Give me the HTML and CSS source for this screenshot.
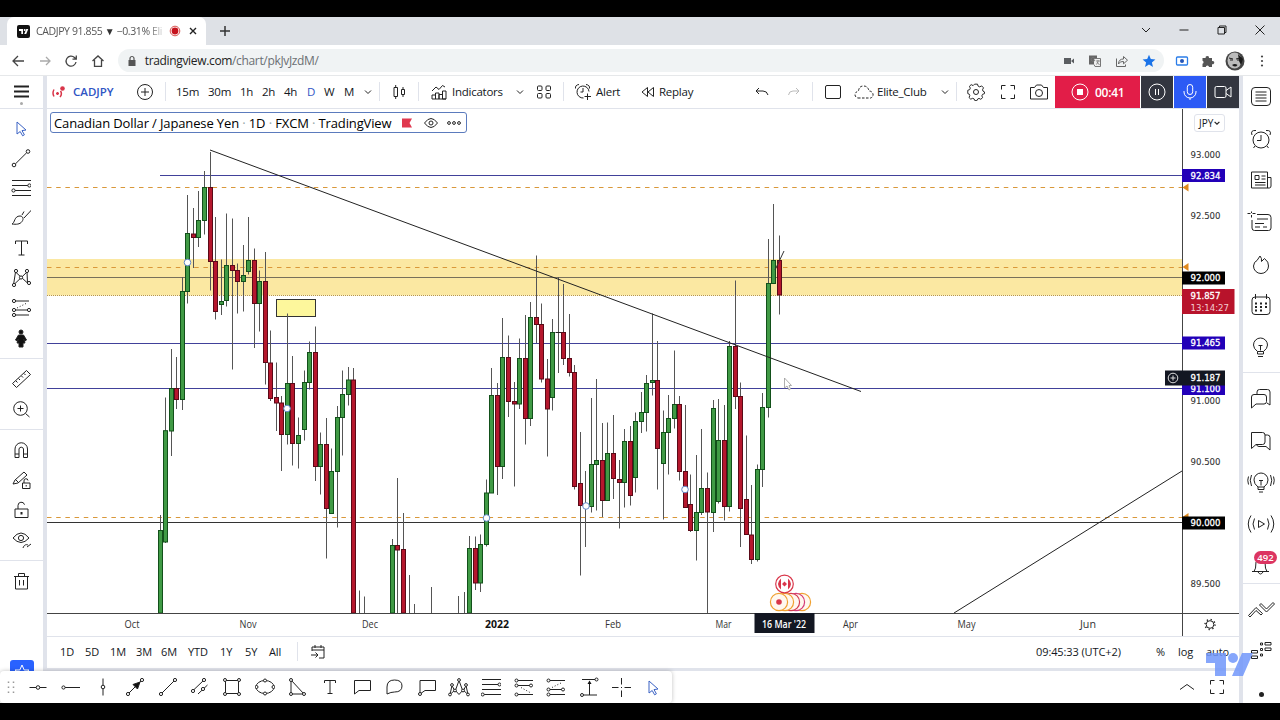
FILE: index.html
```
<!DOCTYPE html>
<html lang="en">
<head>
    <meta charset="UTF-8" />
    <meta name="viewport" content="width=device-width, initial-scale=1" />
    <title>CADJPY 91.855</title>
    <link rel="stylesheet" href="styles.css">
</head>
<body>
    <svg class="defs">
        <symbol id="chev" viewBox="0 0 10 10"><path d="M2 3.5l3 3 3-3" /></symbol>
        <symbol id="cursor" viewBox="0 0 20 20"><path d="M6 4l9 8-4 .6 2.400 4.200-1.800 1-2.400-4.300L6 16z" /></symbol>
        <symbol id="full" viewBox="0 0 20 20"><path d="M3.500 7.500v-4h4M12.500 3.500h4v4M16.500 12.500v4h-4M7.500 16.500h-4v-4" /></symbol>
    </svg>

    <div class="browser">
        <div class="tabs">
            <div class="tab">
                <svg class="favicon" viewBox="0 0 13 13"><rect width="13" height="13" rx="2" fill="#111" /><path d="M2 4h4v5H4.300V6H2zM9.300 4h2L9.200 9h-2z" fill="#fff" /><circle cx="7.700" cy="5" r="1" fill="#fff" /></svg>
                <span class="tab-title">CADJPY 91.855 <i>▼</i> −0.31% Eli</span>
                <svg class="rec-dot" viewBox="0 0 12 12"><circle cx="6" cy="6" r="4.800" fill="none" stroke="#d9534f" /><circle cx="6" cy="6" r="3.400" fill="#c5121c" /></svg>
                <svg class="tab-close" viewBox="0 0 10 10"><path d="M2 2l6 6M8 2l-6 6" stroke="#222" stroke-width="1.400" /></svg>
            </div>
            <svg class="new-tab" viewBox="0 0 12 12"><path d="M6 1v10M1 6h10" stroke="#333" stroke-width="1.500" /></svg>
            <div class="win-buttons">
                <svg viewBox="0 0 12 12"><path d="M2 4l4 4 4-4" /></svg>
                <svg viewBox="0 0 12 12"><path d="M1.500 6h9" /></svg>
                <svg viewBox="0 0 12 12"><path d="M2 3.500h6.500V10H2zM3.500 3V2h6.500v6.500H9" /></svg>
                <svg viewBox="0 0 12 12"><path d="M1.500 1.500l9 9M10.500 1.500l-9 9" /></svg>
            </div>
        </div>
        <div class="navbar">
            <svg class="nav-icon" viewBox="0 0 14 14"><path d="M13 7H2M7 2L2 7l5 5" stroke="#444" /></svg>
            <svg class="nav-icon" viewBox="0 0 14 14"><path d="M2 7h10M8 3l4 4-4 4" stroke="#aaa" /></svg>
            <svg class="nav-icon" viewBox="0 0 14 14"><path d="M12 8A5 5 0 1 1 10.500 3.500L12 5M12.300 1.500V5.200H8.500" stroke="#444" /></svg>
            <svg class="nav-icon" viewBox="0 0 14 14"><path d="M1.500 7L7 2l5.500 5M3.500 6v6.300h7V6" stroke="#444" /></svg>
            <div class="omnibox">
                <svg class="lock" viewBox="0 0 10 12"><rect x="1.500" y="5" width="7" height="6" fill="#555" /><path d="M3 5V3.500a2 2 0 0 1 4 0V5" fill="none" stroke="#555" stroke-width="1.200" /></svg>
                <span class="url">tradingview.com<i>/chart/pkJvJzdM/</i></span>
                <div class="omni-icons">
                    <svg viewBox="0 0 14 14"><path d="M2 4h7v6H2zM9 7l3-2.500v5z" fill="#5a5d61" /></svg>
                    <svg viewBox="0 0 14 14"><rect x="1" y="1.500" width="8" height="9" fill="#666" /><path d="M6 4.500h6.500v8H7l-1-2" fill="#eee" stroke="#777" /><path d="M6.500 4A2 2 0 1 0 7 6H5M8 7h4M10 6v1c0 2-1 3-2 3.500M9 8l2.500 3" fill="none" stroke="#777" stroke-width=".8" /></svg>
                    <svg viewBox="0 0 14 14"><path d="M1.500 4.500v8h9v-2M3.500 10c0-3.500 2-5 5-5V2.500l4 3.700-4 3.600V7.500c-2 0-4 .5-5 2.500z" fill="none" stroke="#666" /></svg>
                    <svg viewBox="0 0 14 14"><path d="M7 .8l1.800 4.200 4.600.4-3.500 3 1.100 4.500L7 10.500 3 12.900l1.100-4.500-3.500-3 4.600-.4z" fill="#1a73e8" /></svg>
                </div>
            </div>
            <div class="ext-icons">
                <svg viewBox="0 0 14 14"><rect x="1.500" y="3" width="11" height="8" rx="1" fill="#fff" stroke="#2b7de9" stroke-width="1.300" /><circle cx="7" cy="7" r="2" fill="#2456b8" /></svg>
                <svg viewBox="0 0 14 14"><path d="M1.500 4h3.200a1.700 1.700 0 1 1 3.300 0H11v3a1.700 1.700 0 1 1 0 3.200V13H8a1.600 1.600 0 0 0-3.200 0H1.500V9.800a1.600 1.600 0 0 0 0-3z" fill="#555" /></svg>
                <svg class="avatar" viewBox="0 0 20 20"><circle cx="10" cy="10" r="9.500" fill="#444" /><ellipse cx="9.500" cy="9.500" rx="7" ry="8" fill="#bbb" /><path d="M4 7l4 1M11 8l4-1M5 9h3M12 9h2" stroke="#222" fill="none" /><path d="M7 14q3-2 5.500 0-2 3-5.500 0M13 3l5 5-2 6-2-4z" fill="#1a1a1a" /></svg>
                <svg viewBox="0 0 14 14"><circle cx="7" cy="2.500" r="1.100" fill="#444" /><circle cx="7" cy="7" r="1.100" fill="#444" /><circle cx="7" cy="11.500" r="1.100" fill="#444" /></svg>
            </div>
        </div>

        <div class="app">
            <div class="tools">
                <div class="menu">
                    <svg viewBox="0 0 20 20"><path d="M3 4.500h15M3 9.500h15M3 14.500h15" stroke-width="1.800" /></svg>
                    <span class="dot"></span>
                </div>
                <svg class="blue" viewBox="0 0 20 20"><use href="#cursor" /></svg>
                <svg viewBox="0 0 20 20"><circle cx="3" cy="17" r="1.800" /><circle cx="17" cy="3.500" r="1.800" /><path d="M4.500 15.800L15.600 4.800" /></svg>
                <svg viewBox="0 0 20 20"><path d="M1 2.500h19M1 7.500h17M4 12.500h16M1 17.500h19" /><circle class="w" cx="18.400" cy="7.500" r="1.600" /><circle class="w" cx="2.500" cy="12.500" r="1.600" /></svg>
                <svg viewBox="0 0 20 20"><path d="M1 16c3-1 2-8 8-8 3 0 4 3 2 5.500-2 3-6 3-10 2.500zM11 7l2-3.500M13 10l7.500-8" /></svg>
                <svg viewBox="0 0 20 20"><path d="M4.500 6V3h12v3M10.500 3v14M7.500 17h6" /></svg>
                <svg viewBox="0 0 20 20"><path d="M2.500 17L4.500 4l12 11L16 4 2.500 17" /><circle class="w" cx="3" cy="17" r="1.600" /><circle class="w" cx="5" cy="3" r="1.600" /><circle class="w" cx="10" cy="9.500" r="1.600" /><circle class="w" cx="16" cy="3" r="1.600" /><circle class="w" cx="18" cy="15" r="1.600" /></svg>
                <svg viewBox="0 0 20 20"><path d="M3 3h15M3 12h15M3 17h15" /><path d="M6 10l10-5" stroke-dasharray="1 2" /><circle class="w" cx="3" cy="3" r="1.600" /><circle class="w" cx="3" cy="12" r="1.600" /><circle class="w" cx="18" cy="12" r="1.600" /><circle class="w" cx="3" cy="17" r="1.600" /></svg>
                <svg viewBox="0 0 20 20"><path d="M7.500 7h5l3 5-1.500 1-1.500-2 1.500 4h-2v4H8v-4H6l1.500-4L6 13l-1.500-1z" fill="#111" /><circle cx="10" cy="4" r="2" fill="#111" /></svg>
                <hr class="gap-a">
                <svg viewBox="0 0 20 20"><path d="M1.500 14.500L15.500 1.500l4 4L5.500 18.500zM5 12l1.500 1.500M7.500 9.500L9 11M10.500 7L12 8.500M13 4.500L14.500 6" /></svg>
                <svg viewBox="0 0 20 20"><circle cx="9.500" cy="9.500" r="6.800" /><path d="M6.500 9.500h6M9.500 6.500v6M14.500 14.500l4 3.500" /></svg>
                <hr class="gap-b">
                <svg viewBox="0 0 20 20"><path d="M4 17.500V9a6.200 6.200 0 0 1 12.500 0v8.500h-4V9a2.300 2.300 0 0 0-4.500 0v8.500zM4 14h4M12.500 14h4" /></svg>
                <svg viewBox="0 0 20 20"><path d="M2 14l2-4 9-8 3 3-9 8zM5 10l2.500 2.500M11.500 13h7.500v5.500h-7.500zM13 13v-2a2 2 0 0 1 4-.5M15.200 15v1.500" /></svg>
                <svg viewBox="0 0 20 20"><path d="M4 9h13v8.500H4zM7 9V5.500a3.300 3.300 0 0 1 6.500-.8" /><path d="M10.500 12v2.500" stroke-width="2" /></svg>
                <svg viewBox="0 0 20 20"><path d="M2 8q8-10 16 0-8 9-16 0zM12 18c1-3 3-4 5-3M16 17l4-3" /><circle cx="10" cy="8" r="2.600" /></svg>
                <hr class="gap-c">
                <svg class="trash" viewBox="0 0 20 20"><path d="M3 5.500h15M7.500 5V2.500h6V5M4.500 5.500V18h12V5.500M8.500 9v5.500M12.500 9v5.500" /></svg>
                <div class="fav"><svg viewBox="0 0 20 20"><path d="M10 3l2.200 5H17l-4 3.500L14.500 17 10 14l-4.500 3L7 11.500 3 8h4.800z" stroke="#fff" /></svg></div>
            </div>

            <div class="main">
                <div class="topbar">
                    <svg class="pair" viewBox="0 0 14 14"><path d="M2 4.500Q0 8 2 11.500M8.500 6Q10.500 9 8 12M4 8.500h3M5.500 7v3" stroke="#d9364a" stroke-width="1.500" /><circle cx="10.500" cy="3.500" r="2.300" fill="#d9364a" stroke="none" /></svg>
                    <b class="symbol">CADJPY</b>
                    <svg class="i18" viewBox="0 0 18 18"><circle cx="9" cy="9" r="7.500" /><path d="M5 9h8M9 5v8" /></svg>
                    <span class="bar"></span>
                    <span>15m</span><span>30m</span><span>1h</span><span>2h</span><span>4h</span><span class="blue-text">D</span><span>W</span><span>M</span>
                    <svg class="chev" viewBox="0 0 10 10"><use href="#chev" /></svg>
                    <span class="bar"></span>
                    <svg class="i16" viewBox="0 0 16 16"><path d="M3 3.500h3.500v9H3zM4.700 1v2.500M4.700 12.500V15M10.500 5.500h3v5h-3zM12 3v2.500M12 10.500V13" /></svg>
                    <span class="bar"></span>
                    <svg class="i16" viewBox="0 0 16 16"><path d="M1 7l4-4 3 2.500L11.500 1.500 14 3M1 15v-4h3.500v4M4.500 15V9H8v6M8 15v-4.500h3.500V15M11.500 15V7H15v8zM1 15h14" /></svg>
                    <span>Indicators</span>
                    <svg class="chev" viewBox="0 0 10 10"><use href="#chev" /></svg>
                    <svg class="i16" viewBox="0 0 16 16"><rect x="1.500" y="2" width="4.500" height="4.500" rx="1" /><rect x="10" y="2" width="4.500" height="4.500" rx="1" /><rect x="1.500" y="9.500" width="4.500" height="4.500" rx="1" /><rect x="10" y="9.500" width="4.500" height="4.500" rx="1" /></svg>
                    <span class="bar"></span>
                    <svg class="i18" viewBox="0 0 18 18"><path d="M9.500 15A6 6 0 1 1 15 8.500M9 5v4H6.500M1.500 5.500Q1 2 5 1.500M12 1.500q4 .5 3.500 4M13.500 10.500v6.500M10.500 13.500h6.500" /></svg>
                    <span>Alert</span>
                    <svg class="i16" viewBox="0 0 16 16"><path d="M7.500 3.500v9L2 8zM13.500 3.500v9L8 8z" /></svg>
                    <span>Replay</span>
                    <svg class="i16" viewBox="0 0 16 16"><path d="M5 4L2 7l3 3M2 7h7q4 0 5 4" /></svg>
                    <svg class="i16 pale" viewBox="0 0 16 16"><path d="M10 4l3 3-3 3M13 7H7q-4 0-4.500 4" /></svg>
                    <span class="bar"></span>
                    <svg class="i18" viewBox="0 0 18 18"><rect x="1.500" y="2.500" width="15" height="13" rx="1.500" /></svg>
                    <svg class="cloud" viewBox="0 0 20 16"><path d="M4 14h12.500q3-1 2.500-4-1-3-4-3-1-5-5.500-5T4.500 7Q1 8 1 11q.5 2.500 3 3z" stroke-dasharray="2.500 1.500" /></svg>
                    <span>Elite_Club</span>
                    <svg class="chev" viewBox="0 0 10 10"><use href="#chev" /></svg>
                    <span class="bar"></span>
                    <svg class="i18" viewBox="0 0 18 18"><path d="M7.500 1.500h3l.6 2 1.700.8 2-1 1.900 2-1 2 .5 1.400 1.500.8v1.800l-2 .7-.7 1.600.8 1.800-1.900 1.700-1.800-.9-1.400.6-.8 1.700H7.800l-.8-1.800-1.500-.6-1.900.9-1.800-1.700.8-2-.6-1.500-1.500-.6V7.800l2-.7.6-1.500-.9-1.900 1.800-1.700 2 1z" transform="translate(.3 -.3)scale(.97)" /><circle cx="9" cy="9" r="2.500" /></svg>
                    <svg class="i20" viewBox="0 0 20 20"><use href="#full" /></svg>
                    <svg class="i20" viewBox="0 0 20 20"><path d="M1.500 5.500h4L7.500 3h5l2 2.500h4v11.500h-17z" /><circle cx="10" cy="11" r="3.500" /></svg>
                    <div class="recorder">
                        <div class="stop"><svg viewBox="0 0 18 18"><circle cx="9" cy="9" r="8" /><rect x="6" y="6" width="6" height="6" fill="#fff" stroke="none" /></svg>00:41</div>
                        <div class="btn"><svg viewBox="0 0 18 18"><circle cx="9" cy="9" r="8" /><path d="M7.500 6v6M10.500 6v6" /></svg></div>
                        <div class="btn mic"><svg viewBox="0 0 18 18"><rect x="6.300" y="1.500" width="5.400" height="10" rx="2.700" /><path d="M3 8v1a6 6 0 0 0 12 0V8M9 15v2" /></svg></div>
                        <div class="btn"><svg viewBox="0 0 18 18"><rect x="1" y="3.500" width="11" height="11" rx="1.500" /><path d="M12 7.500L17 4v10l-5-3.500" /></svg></div>
                    </div>
                </div>

                <div class="chart-wrap">
                    <svg id="chart" viewBox="47 109 1192 527" width="1192" height="527"></svg>
                    <div class="legend">
                        <span>Canadian Dollar / Japanese Yen <i>·</i> 1D <i>·</i> FXCM <i>·</i> TradingView</span>
                        <svg class="flag" viewBox="0 0 12 12"><path d="M1 1.500h10L8.500 6l2.500 4.500H1z" fill="#e0384e" stroke="none" /></svg>
                        <svg class="eye" viewBox="0 0 16 12"><path d="M1.500 6q6.500-9 13 0-6.500 9-13 0z" /><circle cx="8" cy="6" r="2" /></svg>
                        <svg class="more" viewBox="0 0 16 6"><circle cx="3" cy="3" r="1.400" /><circle cx="8" cy="3" r="1.400" /><circle cx="13" cy="3" r="1.400" /></svg>
                    </div>
                    <div class="currency">JPY<svg viewBox="0 0 10 10"><use href="#chev" /></svg></div>
                </div>

                <div class="ranges">
                    <span>1D</span><span>5D</span><span>1M</span><span>3M</span><span>6M</span><span>YTD</span><span>1Y</span><span>5Y</span><span>All</span>
                    <span class="bar"></span>
                    <svg class="i16" viewBox="0 0 16 16"><path d="M2 7V3h12v11H9M2 6h12M5 1v3M11 1v3M1 11h7M5.500 8.500L8 11l-2.500 2.500" /></svg>
                    <span class="clock">09:45:33 (UTC+2)</span><span>%</span><span>log</span><span>auto</span>
                </div>
                <div class="bottom">
                    <svg viewBox="0 0 20 20"><path d="M3 12.500l7-5 7 5" /></svg>
                    <svg viewBox="0 0 20 20"><use href="#full" /></svg>
                </div>
            </div>

            <div class="side">
                <svg viewBox="0 0 22 22"><rect x="1.500" y="1.500" width="19" height="18" rx="3.500" /><path d="M5.500 6h11M5.500 9h11M5.500 12h11M5.500 15h11" /></svg>
                <svg viewBox="0 0 22 22"><circle cx="11" cy="12" r="8" /><path d="M11 7v5.500H7M2 7Q0 2 6 2.500M16 2.500q6-.5 4 4.500M5 18l-1.500 2M17 18l1.500 2" /></svg>
                <svg viewBox="0 0 22 22"><path d="M1.500 3h16v16h-16zM17.500 8.500h3.500V17q0 2-1.700 2h-2M5 6.500h4v4H5zM11.500 7h4M11.500 10h4M5 13.500h10.500M5 16h10.500" /></svg>
                <svg class="wide" viewBox="-3 0 28 22"><path d="M7 3.500h11q3 0 3 3V17q0 2.500-2.500 2.500h-14Q2 19.500 2 17V9M7 8h11M5 12.500h9M5 16h5M13 16h4M-2.500 2.500h3M1.500.5v1.500M2.500 2.500h3M1.500 4v2.500" /></svg>
                <svg viewBox="0 0 22 22"><path d="M10 3Q12 5 11.500 8.500L14.500 5.500Q19 9 18.500 13a7.500 7.500 0 0 1-15 0Q4 8.500 7 7.500L10 3z" /></svg>
                <svg viewBox="0 0 22 22"><rect x="2" y="3" width="18" height="17.500" rx="3" /><path d="M5.500 0v5M16.500 0v5" /><path d="M5 9.500h2M10 9.500h2M15 9.500h2M5 13h2M10 13h2M15 13h2M5 16.500h2M10 16.500h2" stroke-width="1.800" /></svg>
                <svg viewBox="0 0 22 22"><path d="M7.500 15.500Q3.500 12.500 3.500 9a7 7 0 0 1 14 0q0 3.500-4 6.500zM7.500 15.500V18h6v-2.500M8 20.500h5M8.500 9.500h4M10.500 9.500v5" /></svg>
                <hr class="s1">
                <svg viewBox="0 0 22 22"><path d="M7 6V4q0-2.500 2.500-2.500h8Q20 1.500 20 4v13l-3-2M4 6.500h10q2.500 0 2.500 2.500v4.500q0 2.500-2.500 2.500H6l-4.500 4V9q0-2.500 2.500-2.500z" /></svg>
                <svg viewBox="0 0 22 22"><path d="M1.500 2.500h11Q15 2.500 15 5v7q0 2.500-2.500 2.500H6l-4.500 4zM15 5h2.500Q20 5 20 7.500V20l-4-3.500H9q-2 0-2.500-2" /></svg>
                <svg class="wide" viewBox="0 0 28 22"><path d="M11 16Q7 13 7 9a7 7 0 0 1 14 0q0 4-4 7zM11 16v2.500h6V16M12 21h4M12 9.500h4M14 9.500v5M4.500 4Q2 9 4.500 15M1.500 5.500Q0 9 1.500 13.500M23.500 4q2.500 5 0 11M26.500 5.500q1.500 3.500 0 8" /></svg>
                <svg class="wide" viewBox="0 0 28 22"><path d="M11.500 7.500v7l6-3.500zM7.500 5.500Q4.500 11 7.500 16.500M4 2.500q-5.500 8.500 0 17M20.500 5.500q3 5.500 0 11M24 2.500q5.500 8.500 0 17" /></svg>
                <div class="bell">
                    <svg viewBox="0 0 22 22"><path d="M2 16.500h17M4 16.500q2-2 2-9.500M17 16.500q-2-2-2-9.500M8 17q2.500 4 5 0" /></svg>
                    <span class="badge">492</span>
                </div>
                <hr class="s2">
                <svg class="wide" viewBox="0 0 28 22"><path d="M1.500 16.500l7.500-8 6.500 6-1.500 1.500-5-4.500-6 6.500zM12.500 6L14 4.500l5.500 5.500 6.500-6.500 1.500 1.500-8 8z" /></svg>
                <svg viewBox="0 0 22 22"><path d="M1.500 10.500h6v2.500h-6zM1.500 16h6v2.500h-6zM15 2.500h6V5h-6zM15 8h6v2.500h-6zM10.500 3h2v2h-2zM10.500 8.500h2v2h-2zM10.500 14h2v2h-2z" /></svg>
                <span class="tip"></span>
            </div>

            <svg class="tv-logo" viewBox="0 0 47 24"><path d="M0 1h20v23H9V11H0zM36 1h11l-10 23H26z" fill="#7297fb" /><circle cx="27" cy="6" r="5" fill="#7297fb" /></svg>

            <div class="drawbar">
                <svg class="grip" viewBox="0 0 10 14"><path d="M2.500 1.500v12M7.500 1.500v12" stroke="#999" stroke-width="1.500" stroke-dasharray="1.500 3.500" /></svg>
                <svg viewBox="0 0 20 20"><path d="M1.500 10.500h17" /><circle class="w" cx="10" cy="10.500" r="1.800" /></svg>
                <svg viewBox="0 0 20 20"><path d="M3 10.500h16" /><circle class="w" cx="2.500" cy="10.500" r="1.600" /></svg>
                <svg viewBox="0 0 20 20"><path d="M10 1.500v17" /><circle class="w" cx="10" cy="10" r="1.800" /></svg>
                <svg viewBox="0 0 20 20"><path d="M3 17L16.500 3.500" /><path d="M15 5l-2.500 7L8 7.500z" fill="#111" /><circle class="w" cx="3" cy="17" r="1.600" /><circle class="w" cx="17" cy="3" r="1.600" /></svg>
                <svg viewBox="0 0 20 20"><path d="M3 17L17 3" /><circle class="w" cx="3" cy="17" r="1.600" /><circle class="w" cx="17" cy="3" r="1.600" /></svg>
                <svg viewBox="0 0 20 20"><path d="M2.500 14L14 3M8 17l9.500-9" /><circle class="w" cx="3" cy="14" r="1.600" /><circle class="w" cx="14" cy="3" r="1.600" /><circle class="w" cx="13" cy="12" r="1.600" /></svg>
                <svg viewBox="0 0 20 20"><path d="M3.500 3.500h13v13h-13z" /><circle class="w" cx="3" cy="3" r="1.500" /><circle class="w" cx="17" cy="3" r="1.500" /><circle class="w" cx="3" cy="17" r="1.500" /><circle class="w" cx="17" cy="17" r="1.500" /></svg>
                <svg viewBox="0 0 20 20"><ellipse cx="10" cy="10" rx="9" ry="6.500" /><circle class="w" cx="1.500" cy="10" r="1.500" /><circle class="w" cx="18.500" cy="10" r="1.500" /><circle class="w" cx="10" cy="3.500" r="1.500" /><circle class="w" cx="10" cy="16.500" r="1.500" /></svg>
                <svg viewBox="0 0 20 20"><path d="M4 3v14h13z" /><circle class="w" cx="4" cy="3" r="1.500" /><circle class="w" cx="4" cy="17" r="1.500" /><circle class="w" cx="17" cy="17" r="1.500" /></svg>
                <svg viewBox="0 0 20 20"><path d="M4.500 6V3.500h11V6M10 3.500v13M7.500 16.500h5" /></svg>
                <svg viewBox="0 0 20 20"><path d="M2.500 3.500h16v10H7l-4.500 3.500z" /></svg>
                <svg viewBox="0 0 20 20"><path d="M3 17V10q0-7 7.500-7Q18 3 18 9t-7.500 6Q7 15 3 17z" /></svg>
                <svg viewBox="0 0 20 20"><path d="M3 17V3.500h15.500v10H8z" /><circle class="w" cx="3" cy="17" r="1.500" /></svg>
                <svg class="head" viewBox="0 0 22 20"><path d="M2 17.500l2-9 3 6 4-11 4 11 3-6 2 9M2 17.500l5-4.500 4 4.500 4-4.500 5 4.500" /><circle class="w" cx="2" cy="17.500" r="1.400" /><circle class="w" cx="4" cy="8" r="1.400" /><circle class="w" cx="7" cy="13.500" r="1.400" /><circle class="w" cx="11" cy="3" r="1.400" /><circle class="w" cx="15" cy="13.500" r="1.400" /><circle class="w" cx="18" cy="8" r="1.400" /><circle class="w" cx="20" cy="17.500" r="1.400" /></svg>
                <svg viewBox="0 0 20 20"><path d="M1 2.500h19M1 7.500h18M1 12.500h19M3 17.500h17" /><circle class="w" cx="18.500" cy="7.500" r="1.500" /><circle class="w" cx="1.700" cy="17.500" r="1.500" /></svg>
                <svg viewBox="0 0 20 20"><path d="M2 3.500h17M2 8.500h15M2 17.500h17" /><path d="M7 10.500l9 5" stroke-dasharray="1 2" /><circle class="w" cx="2.500" cy="3.500" r="1.500" /><circle class="w" cx="2.500" cy="8.500" r="1.500" /><circle class="w" cx="17" cy="8.500" r="1.500" /><circle class="w" cx="2.500" cy="17.500" r="1.500" /></svg>
                <svg viewBox="0 0 20 20"><path d="M2 3.500h17M2 12.500h15M2 17.500h17" /><path d="M6 10.500l10-5" stroke-dasharray="1 2" /><circle class="w" cx="2.500" cy="3.500" r="1.500" /><circle class="w" cx="2.500" cy="12.500" r="1.500" /><circle class="w" cx="17" cy="12.500" r="1.500" /><circle class="w" cx="2.500" cy="17.500" r="1.500" /></svg>
                <svg viewBox="0 0 20 20"><path d="M3 2.500h15M3 18h15M10.500 5v13" /><path d="M10.500 3.500l2 3.500h-4z" fill="#111" stroke="none" /><circle class="w" cx="17.500" cy="2.500" r="1.500" /><circle class="w" cx="3" cy="18" r="1.500" /></svg>
                <svg viewBox="0 0 20 20"><path d="M10.500 1v6.500M10.500 13.500V20M1 10.500h6.500M13.500 10.500H20M10 10.500h1" /></svg>
                <svg class="blue" viewBox="0 0 20 20"><use href="#cursor" /></svg>
            </div>
        </div>
    </div>

    <script src="chart.js"></script>
</body>
</html>
```
FILE: styles.css
```
* {
    box-sizing: border-box;
}
body {
    margin: 0;
    height: 720px;
    padding: 17px 0;
    background: #000;
    overflow: hidden;
    font-family: "Open Sans", "Noto Sans", sans-serif;
    font-size: 11.5px;
    color: #131722;
}
svg {
    display: block;
    fill: none;
    stroke: #222;
    flex: none;
}
i {
    font-style: normal;
}
.defs {
    display: none;
}
.w {
    fill: #fff;
}
.browser {
    height: 686px;
    background: #fff;
    overflow: hidden;
}

/* browser chrome */
.tabs {
    display: flex;
    align-items: center;
    height: 28px;
    background: #dee1e6;
    padding-left: 7px;
}
.tab {
    display: flex;
    align-items: center;
    width: 199px;
    height: 28px;
    padding-left: 10px;
    background: #fff;
    border-radius: 7px 7px 0 0;
}
.tab svg, .new-tab {
    stroke: none;
}
.favicon {
    width: 13px;
    height: 13px;
}
.tab-title {
    width: 127px;
    margin-left: 6px;
    white-space: nowrap;
    font-size: 10.5px;
    letter-spacing: -0.38px;
    color: #555;
    -webkit-mask-image: linear-gradient(to right, #000 88%, rgba(0, 0, 0, .2));
}
.tab-title i {
    font-size: 10px;
    letter-spacing: -0.5px;
    color: #333;
}
.rec-dot {
    width: 12px;
    height: 12px;
    margin-left: 6px;
}
.tab-close {
    width: 10px;
    height: 10px;
    margin-left: 7px;
}
.new-tab {
    width: 12px;
    height: 12px;
    margin-left: 13px;
}
.win-buttons {
    display: flex;
    gap: 26px;
    margin: -3px 14px 0 auto;
}
.win-buttons svg {
    width: 12px;
    height: 12px;
}
.navbar {
    display: flex;
    align-items: center;
    height: 31px;
    padding: 1px 0 0 11px;
    border-bottom: 1px solid #e6e8ea;
}
.nav-icon {
    width: 14px;
    height: 14px;
    margin-right: 12.7px;
    stroke-width: 1.3;
}
.omnibox {
    display: flex;
    align-items: center;
    width: 1046px;
    height: 23px;
    border-radius: 12px;
    background: #f0f3f4;
    padding: 0 8px 0 9px;
}
.omnibox svg, .ext-icons svg {
    stroke: none;
}
.lock {
    width: 10px;
    height: 12px;
}
.url {
    margin-left: 8px;
    font-size: 12px;
    letter-spacing: -0.34px;
    color: #222;
}
.url i {
    color: #6b6f73;
}
.omni-icons, .ext-icons {
    display: flex;
    align-items: center;
    gap: 12.7px;
    margin-left: auto;
}
.omni-icons svg, .ext-icons svg {
    width: 14px;
    height: 14px;
}
.ext-icons {
    margin: 0 11px 0 11px;
}
.ext-icons .avatar {
    width: 20px;
    height: 20px;
    margin: 0 -3px;
}

/* application */
.app {
    position: relative;
    display: grid;
    grid-template-columns: 43px 1192px 37px;
    column-gap: 4px;
    height: 627px;
    background: #e0e3eb;
}
.tools, .side {
    display: flex;
    flex-direction: column;
    align-items: center;
    background: #fff;
    overflow: hidden;
}
.tools svg {
    width: 20px;
    height: 20px;
    margin: 0 1px 10px 0;
}
.tools hr, .side hr {
    width: 100%;
    height: 1px;
    margin: 0;
    border: 0;
    background: #e0e3eb;
    flex: none;
}
.menu {
    width: 43px;
    height: 33px;
    margin-bottom: 9px;
    padding: 6px 11px;
    border-bottom: 1px solid #e0e3eb;
    flex: none;
}
.menu svg {
    margin: 0;
}
.dot {
    display: block;
    width: 3px;
    height: 3px;
    margin: 0 auto;
    border-radius: 50%;
    background: #aaa;
}
.tools .blue, .drawbar .blue {
    stroke: #3a62c4;
}
.tools .gap-a {
    margin-bottom: 10px;
}
.tools .gap-b {
    margin: 0 0 10px;
}
.tools .gap-c {
    margin-bottom: 10px;
}
.fav {
    width: 24px;
    height: 24px;
    margin-top: 59px;
    padding: 2px;
    border-radius: 3px;
    background: #2962ff;
    flex: none;
}
.main {
    display: flex;
    flex-direction: column;
    min-width: 0;
}
.topbar {
    display: grid;
    grid-template-columns: 21px 63px 29px 11px 32px 32px 22px 22px 23px 17px 20px 19px 16px 12px 27px 13px 21px 63px 21px 27px 11px 22px 44px 19px 95px 32px 26px 12px 30px 23px 63px 16px 11px 31px 31px 26px 184px;
    align-items: center;
    height: 33px;
    padding-left: 5px;
    background: #fff;
    border-bottom: 1px solid #e0e3eb;
    white-space: nowrap;
    font-weight: 500;
    letter-spacing: -0.25px;
}
.topbar > span {
    margin-top: -1px;
}
.bar {
    width: 1px;
    height: 19px;
    background: #e0e3eb;
}
.pair {
    width: 14px;
    height: 14px;
}
.symbol {
    margin-top: -1px;
    font-weight: 600;
    letter-spacing: 0;
    color: #2f55c4;
}
.blue-text {
    color: #2f55c4;
}
.chev {
    width: 10px;
    height: 10px;
}
.i16 {
    width: 16px;
    height: 16px;
}
.i18 {
    width: 18px;
    height: 18px;
}
.cloud {
    width: 20px;
    height: 16px;
}
.i20 {
    width: 20px;
    height: 20px;
}
.pale {
    stroke: #bbb;
}
.recorder {
    display: flex;
    gap: 1px;
    height: 32px;
}
.recorder svg {
    width: 18px;
    height: 18px;
    stroke: #fff;
}
.stop {
    display: flex;
    align-items: center;
    gap: 6px;
    width: 85px;
    padding-left: 16px;
    background: #e21d48;
    color: #fff;
    font-weight: 600;
    font-size: 12px;
}
.btn {
    display: flex;
    align-items: center;
    justify-content: center;
    width: 32px;
    background: #333640;
}
.mic {
    background: #2c5af5;
}
.chart-wrap {
    position: relative;
    height: 527px;
    background: #fff;
}
.legend {
    position: absolute;
    left: 3px;
    top: 3px;
    display: flex;
    align-items: center;
    width: 417px;
    height: 21px;
    padding-left: 3px;
    border: 1px solid #5b7bbd;
    border-radius: 3px;
    background: #fff;
    font-size: 13px;
    font-weight: 500;
    letter-spacing: -0.13px;
    white-space: nowrap;
    color: #000;
}
.legend span {
    width: 347px;
}
.legend i {
    color: #9aa;
}
.flag {
    width: 12px;
    height: 12px;
}
.eye {
    width: 16px;
    height: 12px;
    margin-left: 10px;
}
.more {
    width: 16px;
    height: 6px;
    margin-left: 7px;
}
.currency {
    position: absolute;
    left: 1147px;
    top: 5px;
    display: flex;
    align-items: center;
    width: 31px;
    height: 18px;
    padding-left: 4px;
    border: 1px solid #e0e3eb;
    border-radius: 3px;
    font-size: 10px;
    font-weight: 500;
}
.currency svg {
    width: 8px;
    height: 8px;
    stroke-width: 1.5;
}
#chart {
    stroke: none;
}
.ranges {
    display: grid;
    grid-template-columns: 25px 25px 26px 25px 27px 32px 25px 24px 28px 13px 726px 120px 22px 28px 40px;
    align-items: center;
    height: 32px;
    padding: 0 0 2px 13px;
    border-top: 1px solid #e0e3eb;
    background: #fff;
    font-size: 11px;
    font-weight: 500;
    letter-spacing: -0.1px;
}
.bottom {
    display: flex;
    align-items: center;
    gap: 10px;
    flex: 1;
    margin-top: 3px;
    padding-left: 1130px;
    background: #fff;
}
.bottom svg {
    width: 20px;
    height: 20px;
}

.side svg {
    width: 22px;
    height: 22px;
    margin: 0 1px 19.7px 0;
}
.side {
    padding-top: 10px;
}
.side .wide {
    width: 28px;
}
.side .s1 {
    margin: -6px 0 15px;
}
.side .s2 {
    margin: 6px 0 15px;
}
.bell {
    position: relative;
    width: 22px;
    height: 22px;
    margin-right: 1px;
    flex: none;
}
.badge {
    position: absolute;
    left: 4px;
    top: -4px;
    width: 23px;
    height: 13px;
    border-radius: 7px;
    background: #dc3562;
    color: #fff;
    font: 600 9.5px/13px "Open Sans", sans-serif;
    text-align: center;
}
.tip {
    width: 5px;
    height: 5px;
    margin-top: 10px;
    border-radius: 50%;
    background: #222;
}
.tv-logo {
    position: absolute;
    left: 1206px;
    top: 576px;
    width: 47px;
    height: 24px;
    stroke: none;
    opacity: .85;
}
.drawbar {
    position: absolute;
    left: 0;
    bottom: 0;
    display: flex;
    align-items: center;
    width: 672px;
    height: 32px;
    background: #fff;
    border-radius: 4px;
    box-shadow: 0 0 4px rgba(0, 0, 0, .25);
}
.drawbar svg {
    width: 20px;
    height: 20px;
    margin: 0 6.2px;
}
.drawbar .head {
    width: 22px;
    margin: 0 5.2px;
}
.drawbar .grip {
    width: 10px;
    height: 14px;
    margin: 0 6px;
}
```
FILE: chart.js
```
const svg = document.getElementById('chart');
const NS = 'http://www.w3.org/2000/svg';
const FLOOR = 613;
const STEP = 5.527;
const START = 160.3;

function add(tag, attrs, text) {
    const el = document.createElementNS(NS, tag);
    for (const k in attrs) el.setAttribute(k, attrs[k]);
    if (text) el.textContent = text;
    svg.appendChild(el);
    return el;
}

function line(x1, y1, x2, y2, stroke, dash) {
    add('line', { x1, y1, x2, y2, stroke, 'stroke-width': 1, 'stroke-dasharray': dash || 'none' });
}

function label(x, y, text, size, fill, width, extra) {
    add('text', Object.assign({ x, y, fill, 'font-size': size, textLength: width, lengthAdjust: 'spacingAndGlyphs' }, extra), text);
}

// zone and horizontal levels
add('rect', { x: 47, y: 259, width: 1135, height: 36.5, fill: '#fbe8a2' });
line(47, 295.5, 1182, 295.5, '#b5964f', '1 1');
line(47, 277.5, 1182, 277.5, '#77705a');
[187.5, 267.5, 517.5].forEach(y => line(47, y, 1182, y, '#d9983a', '4.5 4.7'));
line(160, 175.5, 1182, 175.5, '#41419a');
line(47, 343.5, 1182, 343.5, '#41419a');
line(47, 388.5, 1182, 388.5, '#41419a');
line(47, 522.5, 1182, 522.5, '#333');
add('rect', { x: 276.5, y: 299.5, width: 39, height: 17, fill: '#fdf79c', stroke: '#333' });

// index, high, body top, body bottom, low, direction
const candles = [
    [0, 515, 530.5, 640, 640, 'g'], [1, 397.5, 430.7, 542, 543, 'g'], [2, 349, 388.5, 431, 456, 'g'],
    [3, 357, 388.5, 399.5, 409, 'r'], [4, 277, 291.5, 399.5, 410, 'g'], [5, 195, 233.5, 291.5, 303.5, 'g'],
    [6, 208, 234, 237.5, 268, 'r'], [7, 191, 220.5, 237.5, 247, 'g'], [8, 171, 187.5, 220.5, 234.5, 'g'],
    [9, 152, 187.5, 261.5, 290.5, 'r'], [10, 217, 261.5, 311.5, 319.5, 'r'], [11, 259.5, 301.5, 304.5, 315, 'g'],
    [12, 213.5, 265.5, 300.5, 306.5, 'g'], [13, 218.5, 265.5, 270.5, 369.5, 'r'], [14, 263.5, 270.5, 281.5, 313.5, 'r'],
    [15, 245, 275.5, 281.5, 311.5, 'g'], [16, 217, 260.5, 271.5, 274.5, 'g'], [17, 248.5, 260.5, 303.5, 348, 'r'],
    [18, 270.5, 281.5, 303.5, 331.5, 'g'], [19, 252, 281.5, 362.5, 384.5, 'r'], [20, 330.5, 363, 398.5, 401, 'r'],
    [21, 362.5, 397.5, 403, 431, 'r'], [22, 396, 403, 434.5, 471, 'r'], [23, 313.5, 383.5, 434.5, 444.5, 'g'],
    [24, 356, 383.5, 443.5, 465.5, 'r'], [25, 417.5, 435.5, 443.5, 468.5, 'g'], [26, 370.5, 382.5, 429.5, 440.5, 'g'],
    [27, 341.5, 352.5, 382.5, 389.5, 'g'], [28, 326.5, 352.5, 466.5, 481, 'r'], [29, 432.5, 444.5, 466.5, 494.5, 'g'],
    [30, 418, 444.5, 508.5, 558.5, 'r'], [31, 448.5, 471.5, 513.5, 513.5, 'g'], [32, 406, 417.5, 471.5, 527.5, 'g'],
    [33, 370.5, 394.5, 417.5, 455.5, 'g'], [34, 367, 380, 394.5, 405.5, 'g'], [35, 368, 380, 640, 640, 'r'],
    [36, 590.5, 640, 640, 640, 'r'], [37, 596.5, 640, 640, 640, 'r'], [42, 539, 545.5, 640, 640, 'g'],
    [43, 478, 545.5, 550, 640, 'r'], [44, 513, 549.5, 640, 640, 'r'], [45, 575, 640, 640, 640, 'r'],
    [46, 604, 640, 640, 640, 'r'], [49, 587, 640, 640, 640, 'r'], [54, 596, 640, 640, 640, 'g'],
    [55, 592, 640, 640, 640, 'g'], [56, 536, 548.5, 640, 640, 'g'], [57, 536.5, 548.5, 583, 590, 'r'],
    [58, 534.5, 544.5, 583, 592, 'g'], [59, 479.5, 493, 544.5, 546.5, 'g'], [60, 368, 395.5, 493, 493, 'g'],
    [61, 383, 395.5, 466.5, 495, 'r'], [62, 318, 357.5, 466.5, 479, 'g'], [63, 335.5, 357.5, 401.5, 417, 'r'],
    [64, 382, 401.5, 404, 486.5, 'r'], [65, 338.5, 358.5, 404, 409, 'g'], [66, 315, 358.5, 418.5, 444.5, 'r'],
    [67, 302, 317.5, 418.5, 426, 'g'], [68, 255.5, 317.5, 324.5, 343, 'r'], [69, 303.5, 324.5, 379, 382.5, 'r'],
    [70, 359, 379, 409, 456.5, 'r'], [71, 319, 332.5, 397.5, 410.5, 'g'], [72, 277, 332.5, 332.5, 373, 'g'],
    [73, 284, 332.5, 358.5, 365, 'r'], [74, 314, 358.5, 372.5, 376.5, 'r'], [75, 365, 372.5, 486.5, 489.5, 'r'],
    [76, 432, 483.5, 505.5, 575.5, 'r'], [77, 471, 505.5, 506.5, 547, 'g'], [78, 398, 464.5, 506.5, 512.5, 'g'],
    [79, 379, 460.5, 464.5, 510.5, 'g'], [80, 423, 460.5, 500.5, 517, 'r'], [81, 422.5, 453.5, 500.5, 500.5, 'g'],
    [82, 415, 453.5, 478.5, 499, 'r'], [83, 460, 479.5, 482.5, 528.5, 'r'], [84, 429, 441.5, 482.5, 507.5, 'g'],
    [85, 426, 441.5, 495.5, 505.5, 'r'], [86, 412.5, 421.5, 477.5, 492.5, 'g'], [87, 392, 412.5, 421.5, 433, 'g'],
    [88, 375, 383.5, 412.5, 431.5, 'g'], [89, 313.5, 380.5, 382.5, 395.5, 'g'], [90, 341, 380.5, 448.5, 489.5, 'r'],
    [91, 410.5, 432.5, 463.5, 519.5, 'g'], [92, 395, 418.5, 432.5, 474.5, 'g'], [93, 350.5, 404.5, 418.5, 428.5, 'g'],
    [94, 396, 404.5, 471.5, 480.5, 'r'], [95, 405, 471.5, 507.5, 507.5, 'r'], [96, 474.5, 504.5, 530.5, 532, 'r'],
    [97, 455, 512.5, 530.5, 560.5, 'g'], [98, 429, 488.5, 512.5, 515, 'g'], [99, 472.5, 488.5, 512, 640, 'r'],
    [100, 400, 408.5, 512.5, 532, 'g'], [101, 399, 440.5, 501.5, 503.5, 'g'], [102, 405, 440.5, 506.5, 520.5, 'r'],
    [103, 341, 346.5, 506.5, 511.5, 'g'], [104, 280.5, 346.5, 396.5, 409, 'r'], [105, 382.5, 396.5, 508.5, 547, 'r'],
    [106, 435.5, 499.5, 534.5, 534.5, 'r'], [107, 485, 535, 559.5, 564, 'r'], [108, 464.5, 469.5, 559.5, 561.5, 'g'],
    [109, 393, 407.5, 469.5, 487, 'g'], [110, 239, 283.5, 407.5, 417.5, 'g'], [111, 204, 260.5, 283.5, 283.5, 'g'],
    [112, 235.5, 260.5, 295, 314.5, 'r']
];

candles.forEach(([i, high, top, bottom, low, dir]) => {
    const x = Math.round(START + i * STEP - 0.5) + 0.5;
    line(x, high, x, Math.min(low, FLOOR), '#555');
    if (top < FLOOR) {
        add('rect', {
            x: x - 2, y: top, width: 4, height: Math.min(bottom, FLOOR) - top,
            fill: dir === 'g' ? '#409a45' : '#b5172d',
            stroke: dir === 'g' ? '#12501a' : '#5a0a18', 'stroke-width': 1
        });
    }
});
line(555.5, 332.5, 561, 332.5, '#222');

// trend lines
line(210, 150, 861, 391.5, '#222');
line(954, 613, 1182, 471, '#222');
line(775, 270, 784, 251, '#333');

[[187.5, 262.5], [287, 408.5], [486.5, 518], [586, 506], [685, 489.5]].forEach(([cx, cy]) =>
    add('circle', { cx, cy, r: 3.3, fill: '#fff', stroke: '#6288c8' }));

// events under the last bars
[[802, '#f0a030'], [796, '#d43c78'], [791, '#d43c50'], [785, '#f0a030'], [779, '#f0a030']].forEach(([cx, stroke]) =>
    add('circle', { cx, cy: 602, r: 8.6, fill: '#fff8f0', stroke, 'stroke-width': 1.2 }));
add('circle', { cx: 779, cy: 602, r: 2.8, fill: '#d9364a' });
add('circle', { cx: 784.5, cy: 584, r: 8.8, fill: '#fff', stroke: '#d9364a', 'stroke-width': 1.2 });
add('path', { d: 'M781 578.5v11q-6-5.500 0-11zM788 578.500v11q6-5.500 0-11zM784.500 581.500l2.500 2.500-2.500 2.500-2.500-2.500z', fill: '#d9364a' });

// mouse pointer
add('path', { d: 'M784.500 378v10l2.500-2 2 4 1.500-1-1.500-3.500h2.500z', fill: '#fff', stroke: '#999', 'stroke-width': .8 });

// axes
line(47, 613.5, 1239, 613.5, '#444');
line(1182.5, 109, 1182.5, 636, '#444');

function price(y, text, box, height = 13) {
    if (box) add('rect', { x: 1182, y: y - height / 2, width: 43, height, fill: box });
    label(1190.5, y + 3.3, text, 9, box ? '#fff' : '#333', 30, { 'font-family': 'DejaVu Sans', stroke: box ? '#fff' : '#333', 'stroke-width': box ? .3 : .1 });
}
price(154.5, '93.000');
price(216, '92.500');
price(400.5, '91.000');
price(461.5, '90.500');
price(584, '89.500');
price(175.5, '92.834', '#2200b8');
price(343, '91.465', '#2200b8');
price(388.5, '91.100', '#2200b8');
[187.5, 267, 517].forEach(y => add('path', { d: `M1182.500 ${y}l6-4v8z`, fill: '#e08a1e' }));
price(278, '92.000', '#000');
price(523, '90.000', '#000');
price(378, '91.187', '#131722', 15);
add('rect', { x: 1165, y: 370.5, width: 17, height: 15, fill: '#131722' });
add('circle', { cx: 1173, cy: 378, r: 4.8, fill: 'none', stroke: '#ddd' });
add('path', { d: 'M1170.500 378h5M1173 375.500v5', stroke: '#ddd' });
add('rect', { x: 1182, y: 289, width: 52.5, height: 25, fill: '#b8132b' });
label(1190.5, 298.5, '91.857', 9, '#fff', 30, { 'font-family': 'DejaVu Sans', stroke: '#fff', 'stroke-width': .3 });
label(1190.5, 310.5, '13:14:27', 9, '#f3ccd2', 38.5, { 'font-family': 'DejaVu Sans' });

[['Oct', 132, 15], ['Nov', 248, 17], ['Dec', 370, 16], ['Feb', 613, 16], ['Mar', 723.5, 16], ['Apr', 850.5, 15], ['May', 966.5, 18], ['Jun', 1088, 16]].forEach(([t, x, w]) =>
    label(x, 628.3, t, 10.5, '#333', w, { 'text-anchor': 'middle' }));
label(497, 628.3, '2022', 10.5, '#111', 24, { 'text-anchor': 'middle', 'font-weight': 700 });
add('rect', { x: 754.5, y: 613, width: 60, height: 20, fill: '#131722' });
label(784, 628.3, "16 Mar '22", 10.5, '#fff', 44, { 'text-anchor': 'middle', 'font-weight': 600 });

// axis settings
add('circle', { cx: 1210, cy: 624.5, r: 3.8, fill: 'none', stroke: '#222' });
add('circle', { cx: 1210, cy: 624.5, r: 5, fill: 'none', stroke: '#222', 'stroke-width': 1.4, 'stroke-dasharray': '1.300 2.627' });
```
